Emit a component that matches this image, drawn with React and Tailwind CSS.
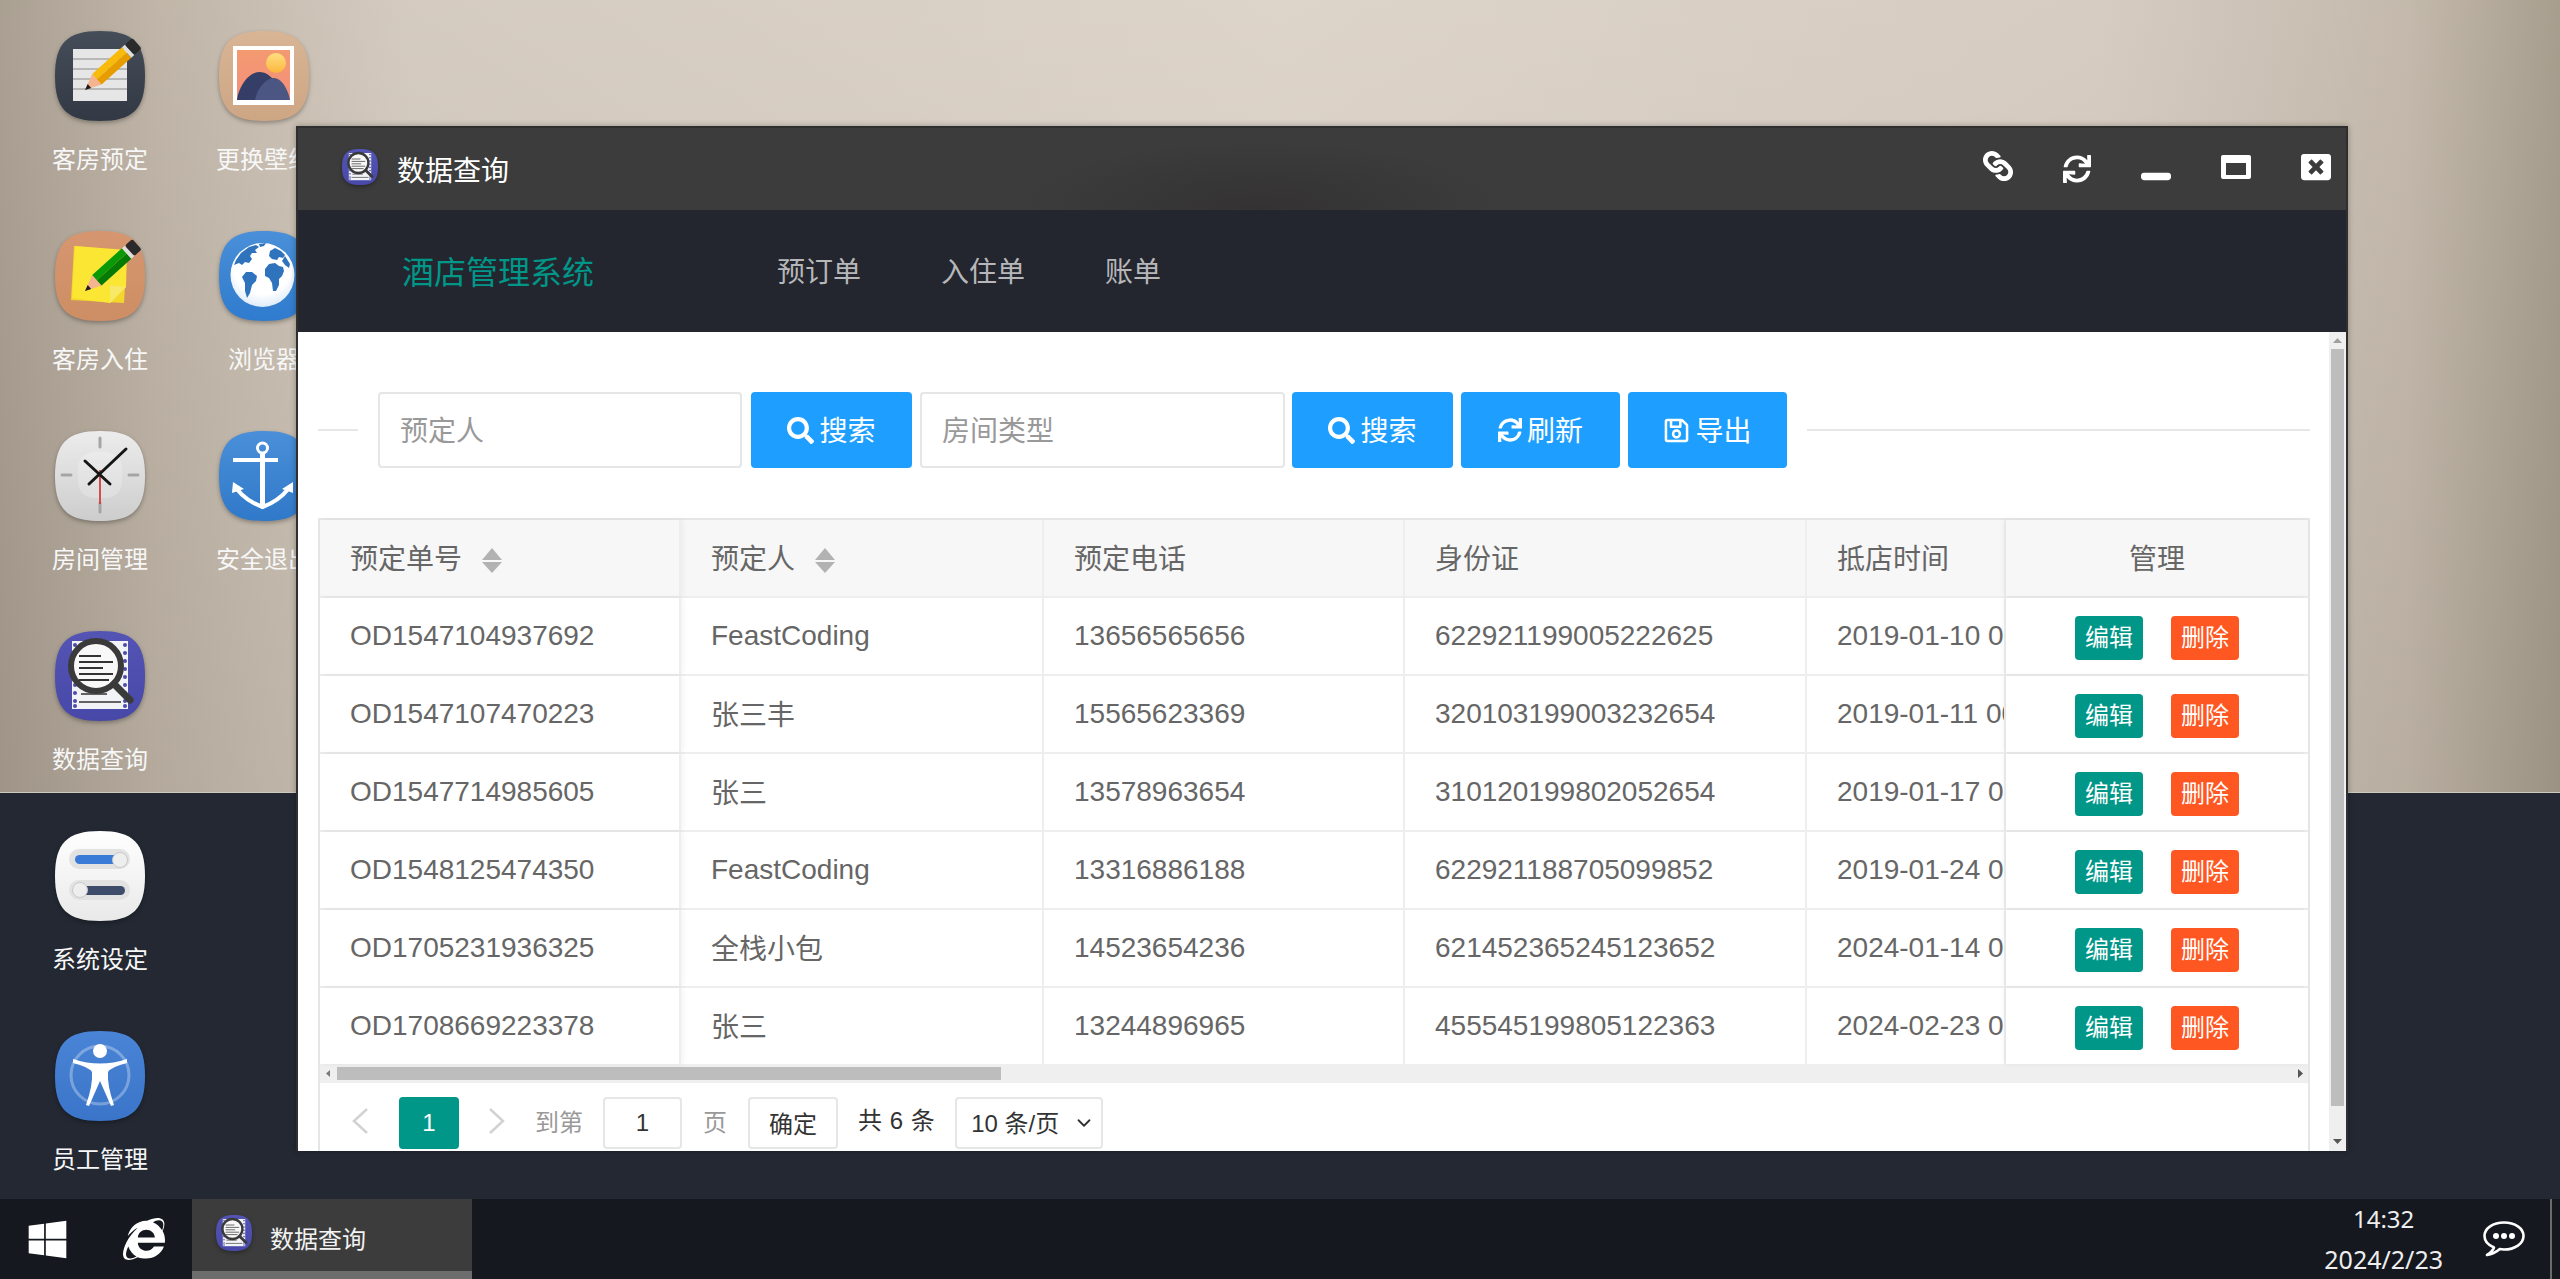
import React from "react";
import { FaWindows, FaInternetExplorer, FaSearch, FaSync, FaRegSave, FaLink, FaWindowMinimize, FaWindowClose } from "react-icons/fa";
import { ChevronDown } from "lucide-react";

const SQ = "M45 0C78 0 90 12 90 45C90 78 78 90 45 90C12 90 0 78 0 45C0 12 12 0 45 0Z";

function Base({ size = 90, from, to, id, children }) {
  return (
    <svg width={size} height={size} viewBox="0 0 90 90" className="block shrink-0 drop-shadow-[0_2px_2px_rgba(0,0,0,0.3)]">
      <defs>
        <linearGradient id={id} x1="0" y1="0" x2="0" y2="1">
          <stop offset="0" stopColor={from} />
          <stop offset="1" stopColor={to} />
        </linearGradient>
      </defs>
      <path d={SQ} fill={`url(#${id})`} />
      {children}
    </svg>
  );
}

function Pencil({ x, y, rot, light, dark }) {
  return (
    <g transform={`translate(${x} ${y}) rotate(${rot})`}>
      <polygon points="0,0 16,-7 16,7" fill="#f3b48f" />
      <polygon points="0,0 6,-2.6 6,2.6" fill="#1c1c1c" />
      <rect x="16" y="-7" width="40" height="7" fill={light} />
      <rect x="16" y="0" width="40" height="7" fill={dark} />
      <rect x="56" y="-7" width="4" height="14" fill="#dedede" />
      <rect x="60" y="-7" width="10" height="14" rx="2" fill="#2a2a2a" />
    </g>
  );
}

const NoteIcon = () => (
  <Base id="g1" from="#454d59" to="#323945">
    <rect x="18" y="18" width="54" height="52" fill="#e6e6e6" />
    <path d="M18 28H72M18 38H72M18 48H72M18 58H72" stroke="#a9a9a9" strokeWidth="1.4" />
    <Pencil x={30} y={59} rot={-42} light="#f8bb0c" dark="#e79c00" />
  </Base>
);

const PictureIcon = () => (
  <Base id="g2" from="#d8b595" to="#cda684">
    <defs>
      <linearGradient id="g2b" x1="0" y1="0" x2="0" y2="1">
        <stop offset="0" stopColor="#f39a70" />
        <stop offset="1" stopColor="#f58e7c" />
      </linearGradient>
      <linearGradient id="g2s" x1="0" y1="0" x2="0" y2="1">
        <stop offset="0" stopColor="#fee081" />
        <stop offset="1" stopColor="#fdb63c" />
      </linearGradient>
    </defs>
    <rect x="14" y="15" width="61" height="59" fill="#fff" />
    <rect x="18" y="19" width="53" height="50" fill="url(#g2b)" />
    <circle cx="57" cy="32" r="10" fill="url(#g2s)" />
    <path d="M18 69C20 55 30 41 40 41C48 41 52 46 56 50C52 56 46 62 44 69Z" fill="#343e66" />
    <path d="M36 69C38 58 46 48 54 47C62 46 69 58 71 69Z" fill="#4c5682" />
  </Base>
);

const StickyIcon = () => (
  <Base id="g3" from="#d69670" to="#cd8e64">
    <polygon points="19,15 72,20 69,72 16,69" fill="#f3d72a" />
    <polygon points="20,15 72,19 71,56 55,72 17,67" fill="#fbe633" />
    <polygon points="55,54 71,56 55,72" fill="#f7e867" />
    <Pencil x={30} y={60} rot={-42} light="#0a9a07" dark="#057a04" />
  </Base>
);

const GlobeIcon = () => (
  <Base id="g4" from="#4a8fd8" to="#2f7bce">
    <defs>
      <radialGradient id="g4b" cx="0.5" cy="0.35" r="0.75">
        <stop offset="0.6" stopColor="#ffffff" />
        <stop offset="1" stopColor="#cfe2f8" />
      </radialGradient>
    </defs>
    <circle cx="43.5" cy="44" r="32" fill="url(#g4b)" />
    <g fill="#2f73bd">
      <path d="M17 29L22 22L30 16L37 14L40 16L36 19L38 22L33 22L31 25L33 28L30 32L26 31L23 34L20 32L15 34Z" />
      <path d="M40 13L47 12L45 15L41 16Z" />
      <path d="M27 41L33 41L38 45L37 50L33 54L31 62L28 67L26 60L26 52L23 46Z" />
      <path d="M51 20L56 17L62 20L66 24L64 27L60 26L58 29L53 28L50 25Z" />
      <path d="M66 25L71 33L70 37L66 34L63 30Z" />
      <path d="M50 33L56 32L60 35L64 36L65 40L63 45L60 48L60 54L57 60L54 60L53 52L50 47L46 45L46 38Z" />
    </g>
  </Base>
);

const ClockIcon = () => (
  <Base id="g5" from="#ececec" to="#cdcdcd">
    <rect x="23" y="21" width="44" height="46" rx="16" fill="#ffffff" opacity="0.22" />
    <path d="M45 7V16M45 72V81M7 44H16M74 44H83" stroke="#a5a5a5" strokeWidth="3" strokeLinecap="round" />
    <path d="M45 39V73" stroke="#d43c3c" strokeWidth="1.8" />
    <path d="M71 18L34 53M30 30L55 53" stroke="#161616" strokeWidth="3" strokeLinecap="round" />
  </Base>
);

const AnchorIcon = () => (
  <Base id="g6" from="#4a8fd8" to="#3079c9">
    <circle cx="43.5" cy="17" r="5" fill="none" stroke="#fff" strokeWidth="3" />
    <rect x="14" y="27" width="45" height="4" fill="#fff" />
    <rect x="41" y="22" width="5" height="52" fill="#fff" />
    <path d="M17 57Q27 70 43.5 76Q60 70 70 57" fill="none" stroke="#fff" strokeWidth="4" />
    <polygon points="13,62 14,51 25,58" fill="#fff" />
    <polygon points="74,62 74,51 63,58" fill="#fff" />
    <polygon points="38,74 49,74 43.5,78" fill="#fff" />
  </Base>
);

const DataIcon = ({ size = 90 }) => (
  <Base size={size} id="g7" from="#5454b4" to="#4848a8">
    <rect x="17" y="10" width="56" height="68" fill="#f1f3f7" />
    {[14, 22, 30, 38, 46, 54, 62, 70, 75].map((y) => (
      <React.Fragment key={y}>
        <circle cx="20" cy={y} r="2" fill="#4c4cab" />
        <circle cx="70" cy={y} r="2" fill="#4c4cab" />
      </React.Fragment>
    ))}
    <path d="M24 71H66M26 63H52" stroke="#333" strokeWidth="1.6" />
    <circle cx="41" cy="35" r="25" fill="#f8f8f8" />
    <path d="M24 25H46M24 31H58M24 37H48M24 43H58M24 49H54" stroke="#333" strokeWidth="1.8" />
    <circle cx="41" cy="35" r="25" fill="none" stroke="#3a3a3a" strokeWidth="6" />
    <path d="M59 53L75 69" stroke="#3a3a3a" strokeWidth="7" strokeLinecap="round" />
  </Base>
);

const SettingIcon = () => (
  <Base id="g8" from="#ffffff" to="#e9e9e9">
    <rect x="14" y="18" width="61" height="20" rx="10" fill="#e2e2e2" />
    <rect x="20" y="24" width="46" height="9" rx="4.5" fill="#3b7bd8" />
    <circle cx="65" cy="29" r="7.5" fill="#eeeeee" stroke="#c9c9c9" />
    <rect x="14" y="49" width="61" height="20" rx="10" fill="#e2e2e2" />
    <rect x="26" y="55" width="44" height="9" rx="4.5" fill="#3c4c6a" />
    <circle cx="25" cy="59" r="7.5" fill="#eeeeee" stroke="#c9c9c9" />
  </Base>
);

const PersonIcon = () => (
  <Base id="g9" from="#4a84d6" to="#3a75c9">
    <circle cx="45" cy="44" r="29" fill="none" stroke="#fff" strokeOpacity="0.3" strokeWidth="3" />
    <circle cx="45" cy="20" r="7" fill="#fff" />
    <path d="M18 28Q45 37 72 28L72 32Q56 36 53 41Q52 54 59 74L56 75L45 50L34 75L31 74Q38 54 37 41Q34 36 18 32Z" fill="#fff" />
  </Base>
);

const desktop = [
  ["客房预定", <NoteIcon />],
  ["客房入住", <StickyIcon />],
  ["房间管理", <ClockIcon />],
  ["数据查询", <DataIcon />],
  ["系统设定", <SettingIcon />],
  ["员工管理", <PersonIcon />],
  ["更换壁纸", <PictureIcon />],
  ["浏览器", <GlobeIcon />],
  ["安全退出", <AnchorIcon />],
];

const rows = [
  ["OD1547104937692", "FeastCoding", "13656565656", "622921199005222625", "2019-01-10 00:00:00"],
  ["OD1547107470223", "张三丰", "15565623369", "320103199003232654", "2019-01-11 00:00:00"],
  ["OD1547714985605", "张三", "13578963654", "310120199802052654", "2019-01-17 00:00:00"],
  ["OD1548125474350", "FeastCoding", "13316886188", "622921188705099852", "2019-01-24 00:00:00"],
  ["OD1705231936325", "全栈小包", "14523654236", "621452365245123652", "2024-01-14 00:00:00"],
  ["OD1708669223378", "张三", "13244896965", "455545199805122363", "2024-02-23 00:00:00"],
];

const gridCols = "grid grid-cols-[361px_363px_361px_402px_199px_302px]";
const cell = "flex items-center pl-[30px] border-r-2 border-[#eeeeee] overflow-hidden whitespace-nowrap";

function Sort() {
  return (
    <svg width="20" height="25" viewBox="0 0 20 25" className="ml-[20px] mt-1 shrink-0">
      <polygon points="10,0 20,12 0,12" fill="#b2b2b2" />
      <polygon points="0,14 20,14 10,25" fill="#b2b2b2" />
    </svg>
  );
}

function Btn({ icon, label, w }) {
  return (
    <button className={`${w} h-[76px] rounded-[4px] bg-[#1e9fff] text-white text-[28px] flex items-center justify-center gap-[5px]`}>
      {icon}
      <span className="mt-[3px]">{label}</span>
    </button>
  );
}

function TextInput({ placeholder, w }) {
  return (
    <input
      placeholder={placeholder}
      className={`${w} h-[76px] rounded-[4px] border-2 border-[#e6e6e6] pl-5 pt-[3px] text-[28px] outline-none placeholder:text-[#999]`}
    />
  );
}

export default function App() {
  return (
    <div className="relative h-[1279px] w-full flex flex-col overflow-hidden font-['Liberation_Sans','Noto_Sans_CJK_SC',sans-serif]">
      <div className="h-[1199px] shrink-0 pl-[18px] pt-[31px] bg-[linear-gradient(to_bottom,transparent_792px,#cfcac0_792px,#cfcac0_793px,#232833_793px),linear-gradient(to_bottom,rgba(255,255,255,0.04),rgba(0,0,0,0.05)_790px),linear-gradient(to_right,#a79c8e_0,#bdb2a4_6%,#d3c9bd_16%,#dcd2c8_50%,#d5cabf_82%,#c2b7a9_94%,#a49a8a_100%)]">
        <div className="grid grid-flow-col grid-rows-[repeat(6,200px)] grid-cols-[164px_164px] w-max">
          {desktop.map(([label, icon]) => (
            <div key={label} className="flex flex-col items-center">
              {icon}
              <div className="mt-[23px] text-[24px] leading-[32px] text-[#f7f7f7] whitespace-nowrap">{label}</div>
            </div>
          ))}
        </div>
      </div>

      <div className="h-20 shrink-0 flex bg-[#15181e] text-white">
        <div className="w-[192px] flex items-center shrink-0">
          <FaWindows size={43} className="ml-[26px]" />
          <FaInternetExplorer size={42} className="ml-[54px]" />
        </div>
        <div className="w-[280px] shrink-0 bg-[#3c3c3c] border-b-8 border-[#6d6d6d] flex items-center pl-6">
          <div className="-mt-1"><DataIcon size={36} /></div>
          <span className="ml-[18px] mt-[10px] text-[24px] text-[#f2f2f2]">数据查询</span>
        </div>
        <div className="flex-1" />
        <div className="flex flex-col items-center justify-center font-['Noto_Sans',sans-serif] text-[24px] leading-[40px] mr-[40px] text-[#eee]">
          <span>14:32</span>
          <span className="text-[25px]">2024/2/23</span>
        </div>
        <div className="flex items-center">
          <svg width="42" height="36" viewBox="0 0 42 36" className="shrink-0">
            <path d="M11 26.5C5 24 1.5 20 1.5 15C1.5 7.5 10 1.5 21 1.5S40.500 7.500 40.500 15S32 28.500 21 28.500C19.500 28.500 18 28.400 16.800 28.100C13.500 31 9 33.500 4 34C7.500 32 10 29.500 11 26.500Z" fill="none" stroke="#fff" strokeWidth="2.600" strokeLinejoin="round" />
            <circle cx="13" cy="15" r="3" fill="#fff" />
            <circle cx="21" cy="15" r="3" fill="#fff" />
            <circle cx="29" cy="15" r="3" fill="#fff" />
          </svg>
        </div>
        <div className="ml-[25px] mr-[8px] w-[2px] bg-[#6b6b6b]" />
      </div>

      <div className="absolute left-[296px] top-[126px] w-[2052px] border-x-2 border-t-2 border-[#2f2f2f] flex flex-col shadow-[0_0_6px_rgba(0,0,0,0.3)]">
        <div className="h-[82px] flex items-center bg-[#3c3c3c] bg-[radial-gradient(ellipse_240px_70px_at_47%_100%,#343232,#3c3c3c)] text-white">
          <div className="ml-[44px] -mt-[4px]"><DataIcon size={36} /></div>
          <span className="ml-[19px] mt-[6px] text-[28px]">数据查询</span>
          <div className="flex-1" />
          <div className="flex items-end gap-[50px] pr-[15px] pb-[6px]">
            <FaLink size={30} className="rotate-90 mb-[1px]" />
            <FaSync size={28} className="mb-[-1px]" />
            <FaWindowMinimize size={30} />
            <svg width="30" height="24" viewBox="0 0 30 24" className="shrink-0 mb-[3px]">
              <path fillRule="evenodd" d="M2 0H28A2 2 0 0 1 30 2V22A2 2 0 0 1 28 24H2A2 2 0 0 1 0 22V2A2 2 0 0 1 2 0ZM5 8V20H25V8Z" fill="#fff" />
            </svg>
            <FaWindowClose size={30} />
          </div>
        </div>
        <div className="h-[122px] flex items-center bg-[#23262e] pl-[104px]">
          <span className="mt-[3px] text-[32px] text-[#009688]">酒店管理系统</span>
          <nav className="flex gap-[80px] ml-[183px] mt-[3px] text-[28px] text-[#b7b7ba]">
            <span>预订单</span>
            <span>入住单</span>
            <span>账单</span>
          </nav>
        </div>
        <div className="h-[819px] flex bg-white overflow-hidden">
          <div className="flex-1 min-w-0 pl-5 pr-[19px] pt-[60px]">
            <div className="flex items-center">
              <div className="w-10 h-[2px] bg-[#e6e6e6]" />
              <div className="ml-5"><TextInput placeholder="预定人" w="w-[364px]" /></div>
              <div className="ml-[9px]"><Btn icon={<FaSearch size={27} />} label="搜索" w="w-[161px]" /></div>
              <div className="ml-2"><TextInput placeholder="房间类型" w="w-[365px]" /></div>
              <div className="ml-[7px]"><Btn icon={<FaSearch size={27} />} label="搜索" w="w-[161px]" /></div>
              <div className="ml-2"><Btn icon={<FaSync size={24} />} label="刷新" w="w-[159px]" /></div>
              <div className="ml-2"><Btn icon={<FaRegSave size={27} />} label="导出" w="w-[159px]" /></div>
              <div className="ml-5 flex-1 h-[2px] bg-[#e6e6e6]" />
            </div>

            <div className="mt-[50px] border-x-2 border-t-2 border-[#e6e6e6] text-[28px] text-[#666]">
              <div className={`${gridCols} h-[78px] bg-[#f7f7f7] border-b-2 border-[#eeeeee]`}>
                <div className={`${cell} relative z-10 bg-[#f7f7f7] shadow-[2px_0_6px_rgba(0,0,0,0.05)]`}><span className="mt-[3px]">预定单号</span><Sort /></div>
                <div className={cell}><span className="mt-[3px]">预定人</span><Sort /></div>
                <div className={cell}><span className="mt-[3px]">预定电话</span></div>
                <div className={cell}><span className="mt-[3px]">身份证</span></div>
                <div className={cell}><span className="mt-[3px]">抵店时间</span></div>
                <div className="relative z-10 flex items-center justify-center bg-[#f7f7f7] shadow-[-2px_0_6px_rgba(0,0,0,0.05)]"><span className="mt-[3px]">管理</span></div>
              </div>
              {rows.map((r, i) => (
                <div key={r[0]} className={`${gridCols} ${i < 5 ? "h-[78px] border-b-2 border-[#eeeeee]" : "h-[76px]"}`}>
                  <div className={`${cell} relative z-10 bg-white shadow-[2px_0_6px_rgba(0,0,0,0.05)]`}>{r[0]}</div>
                  <div className={cell}><span className={/^[A-Z]/.test(r[1]) ? "" : "mt-[3px]"}>{r[1]}</span></div>
                  <div className={cell}>{r[2]}</div>
                  <div className={cell}>{r[3]}</div>
                  <div className={cell}>{r[4]}</div>
                  <div className="relative z-10 flex items-center justify-center gap-[28px] bg-white shadow-[-2px_0_6px_rgba(0,0,0,0.05)]">
                    <button className="w-[68px] h-[44px] mt-1 rounded-[4px] bg-[#009688] text-white text-[24px]">编辑</button>
                    <button className="w-[68px] h-[44px] mt-1 rounded-[4px] bg-[#ff5722] text-white text-[24px]">删除</button>
                  </div>
                </div>
              ))}
              <div className="h-[19px] flex items-center bg-[#efefef]">
                <svg width="17" height="19" viewBox="0 0 17 19" className="shrink-0"><polygon points="6,9.5 10,6 10,13" fill="#7a7a7a" /></svg>
                <div className="w-[664px] h-[13px] bg-[#bdbdbd]" />
                <div className="flex-1" />
                <svg width="17" height="19" viewBox="0 0 17 19" className="shrink-0"><polygon points="7,5 7,14 12,9.5" fill="#555" /></svg>
              </div>
              <div className="h-[90px] flex items-start pt-[14px] text-[24px] text-[#333]">
                <svg width="16" height="26" viewBox="0 0 16 26" className="ml-[32px] mt-[11px] shrink-0"><path d="M15 1L2 13L15 25" fill="none" stroke="#d2d2d2" strokeWidth="2.5" /></svg>
                <div className="ml-[31px] w-[60px] h-[52px] rounded-[4px] bg-[#009688] text-white flex items-center justify-center">1</div>
                <svg width="16" height="26" viewBox="0 0 16 26" className="ml-[30px] mt-[11px] shrink-0"><path d="M1 1L14 13L1 25" fill="none" stroke="#d2d2d2" strokeWidth="2.5" /></svg>
                <span className="ml-[30px] leading-[52px] text-[#999]">到第</span>
                <div className="ml-[20px] w-[79px] h-[52px] rounded-[4px] border-2 border-[#e6e6e6] flex items-center justify-center">1</div>
                <span className="ml-[21px] leading-[52px] text-[#999]">页</span>
                <div className="ml-[21px] w-[90px] h-[52px] pt-[3px] rounded-[4px] border-2 border-[#e6e6e6] flex items-center justify-center">确定</div>
                <span className="ml-[20px] leading-[48px] tracking-[0.5px]">共 6 条</span>
                <div className="ml-[20px] w-[148px] h-[52px] rounded-[4px] border-2 border-[#e6e6e6] flex items-center pl-[14px]">
                  <span className="mt-[2px]">10 条/页</span>
                  <ChevronDown size={22} className="ml-[14px]" />
                </div>
              </div>
            </div>
          </div>
          <div className="w-[17px] shrink-0 bg-[#efefef] flex flex-col items-center">
            <svg width="17" height="17" viewBox="0 0 17 17" className="shrink-0"><polygon points="8.5,6 13,11 4,11" fill="#a0a0a0" /></svg>
            <div className="w-[13px] h-[757px] bg-[#bdbdbd]" />
            <div className="flex-1" />
            <svg width="17" height="17" viewBox="0 0 17 17" className="shrink-0 mb-[1px]"><polygon points="4,6 13,6 8.5,11" fill="#555" /></svg>
          </div>
        </div>
      </div>
    </div>
  );
}
